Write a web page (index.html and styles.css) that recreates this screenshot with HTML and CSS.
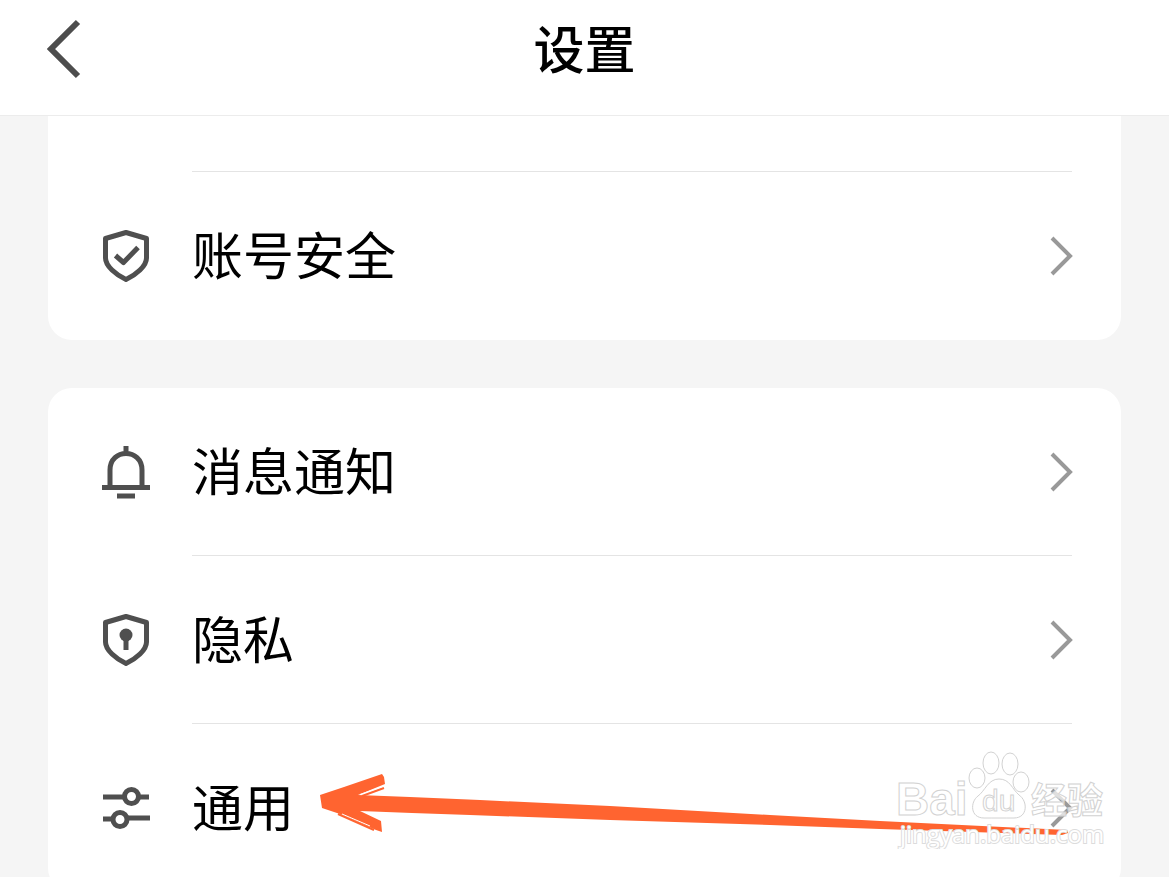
FILE: index.html
```html
<!DOCTYPE html>
<html lang="zh-CN">
<head>
<meta charset="utf-8">
<meta name="viewport" content="width=device-width, initial-scale=1">
<title>设置</title>
<link rel="stylesheet" href="styles.css">
</head>
<body>
<header class="topbar">
  <button class="back" type="button" aria-label="返回">
    <svg width="34" height="60" viewBox="0 0 34 60"><path d="M31 3 L4 30 L31 57"/></svg>
  </button>
  <h1 class="title">设置</h1>
</header>
<main class="content">
  <section class="card card-continued">
    <div class="row-end"></div>
    <a class="row" href="#security">
      <svg class="icon" width="52" height="56" viewBox="0 0 52 56"><path d="M26 4.500 L46.500 10.500 V30 C46.500 38 36 47 26 51.500 C16 47 5.500 38 5.500 30 V10.500 Z"/><path d="M15.500 27.500 L23.500 34.500 L38 19.500"/></svg>
      <span class="label">账号安全</span>
      <svg class="chevron" width="24" height="40" viewBox="0 0 24 40"><path d="M3 2 L21 20 L3 38"/></svg>
    </a>
  </section>
  <section class="card">
    <a class="row" href="#notifications">
      <svg class="icon" width="52" height="56" viewBox="0 0 52 56"><path d="M26 2 V8 M2 43.500 H50 M17 52 H35 M10 43 V26 C10 4 42 4 42 26 V43"/></svg>
      <span class="label">消息通知</span>
      <svg class="chevron" width="24" height="40" viewBox="0 0 24 40"><path d="M3 2 L21 20 L3 38"/></svg>
    </a>
    <a class="row" href="#privacy">
      <svg class="icon" width="52" height="56" viewBox="0 0 52 56"><path d="M26 4.500 L46.500 10.500 V30 C46.500 38 36 47 26 51.500 C16 47 5.500 38 5.500 30 V10.500 Z"/><circle class="solid" cx="26" cy="23" r="6.500"/><path d="M26 24 V38"/></svg>
      <span class="label">隐私</span>
      <svg class="chevron" width="24" height="40" viewBox="0 0 24 40"><path d="M3 2 L21 20 L3 38"/></svg>
    </a>
    <a class="row" href="#general">
      <svg class="icon" width="52" height="56" viewBox="0 0 52 56"><path d="M3 17 H24 M39 17 H49 M3 39 H13 M28 38 H50"/><circle cx="31.500" cy="16.500" r="7"/><circle cx="20" cy="39.500" r="7"/></svg>
      <span class="label">通用</span>
      <svg class="chevron" width="24" height="40" viewBox="0 0 24 40"><path d="M3 2 L21 20 L3 38"/></svg>
    </a>
  </section>
</main>
<svg class="pointer" width="750" height="64" viewBox="0 0 750 64" aria-hidden="true">
  <path d="M0 23 L24 15 L62 2 L64 5 L65 12 L38 23 L90 25 L160 28 L290 34 L450 43 L560 49 L747 58 L748 61 L742 63 L560 57 L450 53 L290 48 L150 43 L92 41 L40 39 L61 49 L62 60 L56 58 L20 42 L2 36 Z"/>
  <path class="edge" d="M42 24 L64 16 M18 42 L54 58"/>
  <path class="streak" d="M40 22.500 L64 14 M22 42 L50 54"/>
</svg>
<svg class="watermark" width="216" height="104" viewBox="0 0 216 104" role="img" aria-label="Baidu经验 jingyan.baidu.com">
  <ellipse cx="96" cy="18" rx="8" ry="11"/>
  <ellipse cx="115" cy="19" rx="8" ry="11"/>
  <ellipse cx="82" cy="33" rx="8" ry="10"/>
  <ellipse cx="126" cy="37" rx="8" ry="10"/>
  <path d="M104 34 C115 34 117 44 124 50 C133 56 133 73 119 73 C110 73 98 73 89 73 C75 73 75 57 83 51 C90 46 93 34 104 34 Z"/>
  <text class="brand" x="1" y="70">Bai</text>
  <text class="du" x="87" y="66">du</text>
  <text class="zh" x="136" y="69">经验</text>
  <text class="url" x="5" y="98">jingyan.baidu.com</text>
</svg>
</body>
</html>
```
FILE: styles.css
```css
* {
  box-sizing: border-box;
}

body {
  margin: 0;
  height: 100vh;
  display: flex;
  flex-direction: column;
  position: relative;
  overflow: hidden;
  background: #f5f5f5;
  color: #000;
  font-family: "Noto Sans CJK SC", sans-serif;
}

svg {
  display: block;
  fill: none;
}

.topbar {
  flex: none;
  display: grid;
  grid-template-columns: 1fr auto 1fr;
  align-items: center;
  height: 116px;
  padding: 0 47px 18px;
  background: #fff;
  border-bottom: 1px solid #ececec;
}

.back {
  justify-self: start;
  padding: 0;
  border: 0;
  background: none;
  cursor: pointer;
}

.back path {
  stroke: #4d4d4d;
  stroke-width: 6;
}

.title {
  margin: 0;
  padding-bottom: 4px;
  font-size: 51px;
  line-height: 72px;
  font-weight: 500;
}

.content {
  flex: 1;
  min-height: 0;
  overflow: hidden;
  display: flex;
  flex-direction: column;
  gap: 48px;
  padding: 0 48px;
}

.card {
  flex: none;
  background: #fff;
  border-radius: 24px;
}

.card-continued {
  border-radius: 0 0 24px 24px;
}

.row-end {
  height: 56px;
  margin: 0 49px 0 144px;
  border-bottom: 1px solid #e4e4e4;
}

.row {
  display: grid;
  grid-template-columns: 52px 1fr 24px;
  column-gap: 40px;
  align-items: center;
  height: 168px;
  padding: 0 48px 0 52px;
  position: relative;
  color: inherit;
  text-decoration: none;
}

.row:not(:last-child)::after {
  content: "";
  position: absolute;
  left: 144px;
  right: 49px;
  bottom: 0;
  height: 1px;
  background: #e4e4e4;
}

.label {
  padding-bottom: 6px;
  font-size: 51px;
  line-height: 76px;
}

.icon {
  stroke: #4f4f4f;
  stroke-width: 5;
  stroke-linejoin: round;
}

.icon .solid {
  fill: #4f4f4f;
  stroke: none;
}

.chevron {
  stroke: #999;
  stroke-width: 4;
}

.pointer {
  position: absolute;
  left: 320px;
  bottom: 41px;
  fill: #ff6430;
}

.edge {
  stroke: #ff6430;
  stroke-width: 2;
}

.streak {
  stroke: #fff;
  stroke-width: 1;
}

.watermark {
  position: absolute;
  right: 58px;
  bottom: 28px;
  fill: rgba(255, 255, 255, 0.7);
  stroke: #d2d2d2;
  stroke-width: 1;
  font-family: "Liberation Sans", "Noto Sans CJK SC", sans-serif;
}

.brand {
  font-size: 46px;
  font-weight: 700;
}

.du {
  font-size: 30px;
}

.zh {
  font-family: "Noto Sans CJK SC", sans-serif;
  font-size: 36px;
  font-weight: 700;
}

.url {
  font-family: "Open Sans", sans-serif;
  font-size: 24px;
  fill: #fff;
  stroke: #dcdcdc;
  stroke-width: 2;
  paint-order: stroke;
}
```
